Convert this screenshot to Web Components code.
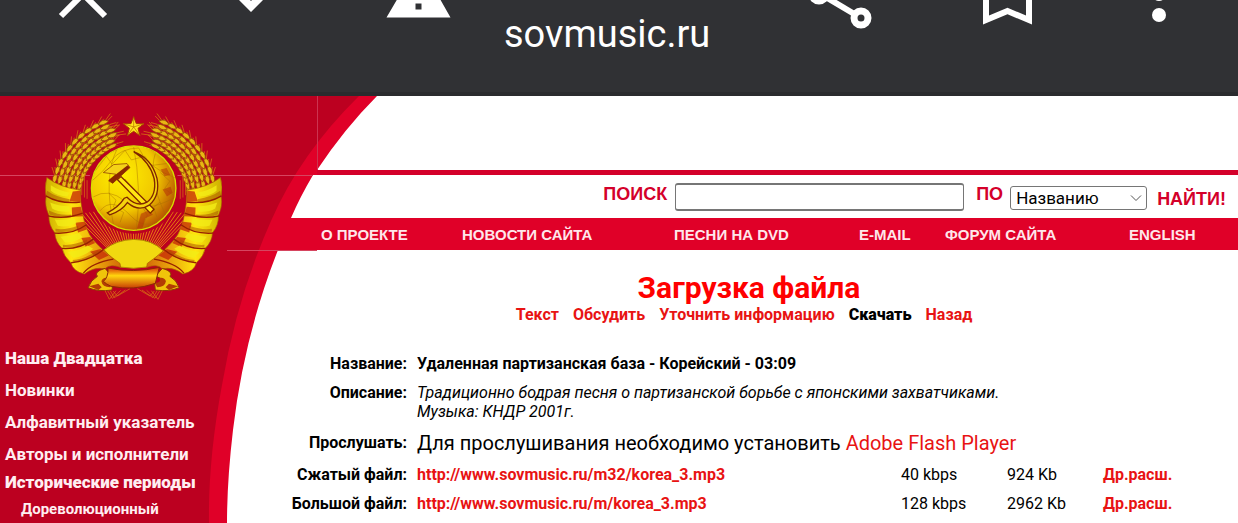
<!DOCTYPE html>
<html lang="ru">
<head>
<meta charset="utf-8">
<meta name="viewport" content="width=device-width, initial-scale=1">
<title>sovmusic.ru - Загрузка файла</title>
<style>
  body { margin: 0; background: #fff; color: #000; font: 16px/19px Roboto, "Liberation Sans", sans-serif; overflow-x: hidden; }
</style>
</head>
<body>
<browser-bar>sovmusic.ru</browser-bar>
<site-frame>
  <side-menu slot="side"></side-menu>
  <site-header slot="header"></site-header>
  <file-page slot="main">Загрузка файла</file-page>
</site-frame>

<script>
// --- Browser toolbar ---

class BrowserBar extends HTMLElement {
  constructor() {
    super();
    this.attachShadow({ mode: 'open' }).innerHTML = `
      <style>
        :host { display: flex; align-items: flex-start; height: 92px; overflow: hidden; background: #303134; border-bottom: 4px solid #2a2b2e; color: #fff; padding-right: 12px; }
        button { flex: none; width: 168px; height: 40px; padding: 0; border: 0; background: none; }
        button:last-child { width: 134px; }
        svg { display: block; width: 100%; height: 40px; fill: #fff; }
        .line { fill: none; stroke: #fff; stroke-width: 6; }
        .host { flex: 1; padding-top: 12px; font-size: 38px; line-height: 44px; }
      </style>
      <button aria-label="Закрыть"><svg viewBox="0 0 168 40"><path class="line" stroke-width="7" d="M61 16 83-6 105 16"/></svg></button>
      <button aria-label="Развернуть"><svg viewBox="0 0 168 40"><path d="M71 0 83 12 95 0H84L83 1 82 0Z"/></svg></button>
      <button aria-label="Не защищено"><svg viewBox="0 0 168 40"><path fill-rule="evenodd" d="M83-38 114.500 17.500H50.500ZM79.500 3.500v6h6v-6Z"/></svg></button>
      <div class="host"><slot></slot></div>
      <button aria-label="Поделиться"><svg viewBox="0 0 168 40"><path class="line" d="M63-7 105 18"/><circle cx="63" cy="-6" r="10.500"/><circle class="line" style="fill:#303134;stroke-width:7" cx="105" cy="18" r="7"/></svg></button>
      <button aria-label="Закладка"><svg viewBox="0 0 168 40"><path class="line" d="M62-20V20L83.500 11 105 20V-20"/></svg></button>
      <button aria-label="Меню"><svg viewBox="0 0 134 40"><circle cx="67" cy="15" r="7"/><circle cx="67" cy="-6" r="7"/></svg></button>
    `;
  }
}
customElements.define('browser-bar', BrowserBar);

// --- State emblem ---

class StateEmblem extends HTMLElement {
  constructor() {
    super();
    this.attachShadow({ mode: 'open' });
  }

  // one ear of wheat that follows an arc around the globe
  ear(radius, from, to) {
    let out = '';
    for (let a = from; a <= to; a += 6) {
      const rad = a * Math.PI / 180;
      const x = Math.round(311 + radius * Math.cos(rad));
      const y = Math.round(292 + radius * Math.sin(rad));
      out += `<g transform="translate(${x} ${y}) rotate(${a + 90})">
        <path class="awn" d="M0 0 36-15M0 3 40 8M0-3 34-24M4 9 44 18"/>
        <path class="grain" d="M-13-7Q5-23 20-5 1 3-13-7ZM-13 7Q5 23 20 5 1-3-13 7Z"/>
      </g>`;
    }
    return out;
  }

  rays() {
    let out = '';
    for (let x = 130; x <= 492; x += 12) {
      out += `<path d="M${Math.round(311 + (x - 311) * 0.350)} 460 ${x} ${320 + Math.round(Math.abs(x - 311) / 8)}"/>`;
    }
    return out;
  }

  connectedCallback() {
    const side = `
      ${this.ear(174, 186, 246)}${this.ear(205, 190, 252)}${this.ear(236, 193, 250)}
      <path class="awn" d="M155 220V285M163 222V292M171 240V296"/>
      <path fill="url(#coil)" stroke="#a85a00" stroke-width="2" d="M50 232Q90 262 151 270 150 300 157 335 165 390 190 420 220 455 270 490L272 502Q240 490 225 506 190 500 163 522 130 515 122 488 100 468 96 445 75 425 74 398 55 375 56 345 42 315 48 290 42 260 50 232Z"/>
      <path fill="#c42508" opacity=".75" d="M128 274 150 272 151 305 118 304ZM125 322 152 320 159 348 126 350ZM136 368 163 365 170 388 144 397ZM154 414 180 411 195 429 167 441ZM180 455 211 447 236 466 207 480Z"/>
      <path fill="#a84a00" opacity=".5" d="M51 272Q75 290 119 297L117 306Q76 306 48 286ZM56 331Q87 347 124 343L121 352Q83 354 58 343ZM76 386Q105 391 144 377L145 388Q105 399 76 394ZM98 434Q131 437 170 419L174 428Q135 445 99 442ZM127 480Q160 479 203 451L211 457Q170 485 131 486Z"/>
      <path fill="#f2ec16" opacity=".8" d="M62 255Q87 272 119 277L112 289Q80 288 62 272ZM60 307Q84 318 118 318L120 334Q87 338 66 325ZM74 358Q103 361 133 354L139 369Q112 384 83 377ZM91 410Q121 408 147 399L157 411Q134 429 105 427ZM113 456Q146 451 173 436L189 446Q164 469 130 474Z"/>
      <path class="cut" d="M47 287Q90 313 151 306M53 347Q105 359 158 339M73 399Q129 403 169 374M95 445Q148 449 190 417M123 488Q180 482 220 448M160 519Q185 488 250 477"/>
      <path fill="#f0c40a" stroke="#8c3903" stroke-width="3" d="M225 505Q190 515 202 529 182 540 174 563 204 576 246 570L248 550Q216 557 218 541L245 528Z"/>
      <path fill="#b33d04" d="M214 544Q218 531 234 534 225 548 248 549L240 562Q217 562 214 544ZM177 559 205 551 215 562 205 570Z"/>
      <path class="awn" d="M225 572 238 598 258 572M233 573 247 595 272 571M241 573 253 593 286 570M249 573 262 588 300 566"/>
    `;
    this.shadowRoot.innerHTML = `
      <style>
        :host { display: block; }
        svg { display: block; width: 178px; height: 187px; }
        .grain { fill: #e9b714; stroke: #8f4304; stroke-width: 2; }
        .awn { fill: none; stroke: #d97a10; stroke-width: 2; }
        .cut { fill: none; stroke: #972000; stroke-width: 4; }
        .rays { fill: none; stroke: #e77911; stroke-width: 3; }
        .map { fill: none; stroke: #a66e00; stroke-width: 2; opacity: .65; }
      </style>
      <svg viewBox="42 38 534 562" role="img" aria-label="Герб СССР">
        <defs>
          <radialGradient id="globe" cx=".35" cy=".35" r=".7">
            <stop offset="0" stop-color="#fff000"/><stop offset=".6" stop-color="#f1c800"/><stop offset="1" stop-color="#b85500"/>
          </radialGradient>
          <linearGradient id="coil" x2="1" y2="0">
            <stop offset="0" stop-color="#ccae00"/><stop offset=".35" stop-color="#ffe60e"/><stop offset="1" stop-color="#d56909"/>
          </linearGradient>
          <linearGradient id="bow" x2="0" y2="1">
            <stop offset="0" stop-color="#d83208"/><stop offset=".4" stop-color="#ffd60e"/><stop offset="1" stop-color="#c83d05"/>
          </linearGradient>
        </defs>
        <g class="rays">${this.rays()}</g>
        <path fill="#f1d910" stroke="#b58e00" stroke-width="3" d="M222 449Q260 419 311 418 365 418 400 452L350 501Q311 508 270 501Z"/>
        <g>${side}</g>
        <g transform="translate(622 0) scale(-1 1)">${side}</g>
        <path fill="url(#bow)" stroke="#8c2c02" stroke-width="3" d="M234 504Q311 520 388 502L376 550Q311 573 243 559Q228 552 220 544 235 533 234 504Z"/>
        <circle cx="311" cy="264" r="137" fill="#bc0020"/>
        <circle cx="311" cy="264" r="127" fill="url(#globe)" stroke="#d6e000" stroke-width="4"/>
        <path class="map" d="M188 240Q220 215 245 180T326 143M190 290Q235 262 285 303T431 294M210 332Q246 287 301 346T413 334M326 143Q350 200 435 233M376 160Q353 230 407 345M260 149Q220 230 250 371M311 140Q335 260 319 390M197 210 229 168 246 192 285 150 304 179 345 168 361 196 410 190M236 279 258 300 250 320 281 337 270 367M391 217 420 243 404 265 429 284M340 325 352 345 338 379M390 306 371 322 381 351"/>
        <path fill="#b42f08" opacity=".55" d="M333 341 357 330 369 344 346 354 338 382 321 385ZM392 208 410 203 421 224 404 228ZM398 268 422 260 428 278 411 289Z"/>
        <path fill="#c06d00" d="M273 245 285 236 374 331 361 341Z"/>
        <path fill="#ffe712" stroke="#7f2600" stroke-width="4" d="M262 238 273 229 372 327 361 339Z"/>
        <path fill="#f4d317" stroke="#7f2600" stroke-width="2" d="M220 217 251 193 291 190 300 202 248 249 236 242 257 222Z"/>
        <path fill="#8c2800" d="M235 240 293 195 300 202 248 250Z"/>
        <path fill="#f5d30e" stroke="#7f2600" stroke-width="4" d="M311 154Q360 184 373 236 380 285 351 306 321 322 291 291L283 294Q265 322 232 338L239 344Q275 332 292 307 326 337 359 314 391 286 381 234 365 174 311 154Z"/>
        <path fill="#ffe31b" stroke="#a83b00" stroke-width="3" d="M311 49 319 70 342 70 324 84 330 106 311 93 292 106 298 84 280 70 303 70Z"/>
        <path fill="none" stroke="#b36600" stroke-width="2" d="M311 49V80L342 70M311 80 330 106M311 80 292 106M311 80 280 70"/>
      </svg>
    `;
  }
}
customElements.define('state-emblem', StateEmblem);

// --- Page frame with the red arc behind everything ---

class SiteFrame extends HTMLElement {
  constructor() {
    super();
    this.attachShadow({ mode: 'open' }).innerHTML = `
      <style>
        :host { display: grid; grid-template-columns: 260px 57px 1fr; grid-template-rows: auto 1fr; }
        svg { grid-area: 1 / 1 / 3 / 4; width: 378px; height: 427px; }
        aside { grid-area: 1 / 1 / 3 / 2; z-index: 1; }
        header { grid-area: 1 / 3; }
        main { grid-area: 2 / 1 / 3 / 4; padding-left: 260px; }
      </style>
      <svg viewBox="0 0 378 427" aria-hidden="true">
        <path fill="#e00028" d="M0 0H377Q345 32 317 74V79H313Q300 101 291 122H318V154H278Q244 240 233 334 227 385 227 427H0Z"/>
        <path fill="#bc0020" d="M0 0H359Q300 58 271 125 237 201 222 289 208 364 209 427H0Z"/>
        <path fill="none" stroke="#d64560" d="M0 79.500H313M227 154.500H317"/>
        <path fill="none" stroke="#cc3350" d="M317.500 0V74"/>
      </svg>
      <aside><slot name="side"></slot></aside>
      <header><slot name="header"></slot></header>
      <main><slot name="main"></slot></main>
    `;
  }
}
customElements.define('site-frame', SiteFrame);

// --- Left menu ---

class SideMenu extends HTMLElement {
  constructor() {
    super();
    this.attachShadow({ mode: 'open' }).innerHTML = `
      <style>
        :host { display: block; padding-top: 17px; }
        state-emblem { padding-left: 44px; padding-bottom: 42px; }
        nav { display: flex; flex-direction: column; padding-left: 5px; font-size: 17px; font-weight: 700; line-height: 32px; white-space: nowrap; }
        a { color: #ffeef1; text-decoration: none; }
        .strong { font-weight: 900; }
        .group { line-height: 24px; }
        .sub { padding-left: 16px; font-size: 15px; line-height: 30px; }
      </style>
      <state-emblem></state-emblem>
      <nav>
        <a class="strong" href="#top50">Наша Двадцатка</a>
        <a href="#new">Новинки</a>
        <a href="#alphabet">Алфавитный указатель</a>
        <a href="#authors">Авторы и исполнители</a>
        <a class="strong group" href="#periods">Исторические периоды</a>
        <a class="sub" href="#before">Дореволюционный</a>
      </nav>
    `;
  }
}
customElements.define('side-menu', SideMenu);

// --- Search row and top navigation ---

class SiteHeader extends HTMLElement {
  constructor() {
    super();
    this.attachShadow({ mode: 'open' }).innerHTML = `
      <style>
        :host { display: block; padding-top: 74px; font-family: "Liberation Sans", Arial, sans-serif; font-weight: 700; white-space: nowrap; }
        form { display: flex; justify-content: flex-end; align-items: center; height: 43px; padding-right: 12px; border-top: 5px solid #d4002a; color: #d4002a; font-size: 18px; line-height: 20px; }
        label { padding-bottom: 6px; }
        input { box-sizing: border-box; flex: 0 1 289px; min-width: 80px; height: 28px; margin: 0 12px 0 8px; padding: 2px 6px; border: 1px solid #767676; border-width: 2px 1px; border-radius: 3px; background: #fff; font: 16px Roboto, sans-serif; }
        .pick { display: grid; align-items: center; width: 137px; margin: 2px 10px 0 7px; }
        select { grid-area: 1 / 1; box-sizing: border-box; width: 137px; height: 24px; padding: 0 5px; appearance: none; border: 1px solid #767676; border-radius: 3px; background: #fff; color: #000; font: 17px/20px Roboto, sans-serif; }
        .pick svg { grid-area: 1 / 1; justify-self: end; width: 12px; height: 8px; margin-right: 5px; fill: none; stroke: #555; pointer-events: none; }
        button { padding: 4px 0 0; border: 0; background: none; color: inherit; font: inherit; }
        nav { display: grid; grid-template-columns: 141fr 212fr 185fr 86fr 184fr 109fr; height: 32px; padding-left: 4px; background: #e00028; font-size: 15px; line-height: 34px; }
        a { color: #ffe6ea; text-decoration: none; }
      </style>
      <form>
        <label for="query">ПОИСК</label>
        <input id="query" type="text">
        <label for="field">ПО</label>
        <span class="pick">
          <select id="field"><option>Названию</option></select>
          <svg viewBox="0 0 12 8"><path d="M1 1.500 6 6.500 11 1.500"/></svg>
        </span>
        <button type="button">НАЙТИ!</button>
      </form>
      <nav>
        <a href="#about">О ПРОЕКТЕ</a>
        <a href="#news">НОВОСТИ САЙТА</a>
        <a href="#dvd">ПЕСНИ НА DVD</a>
        <a href="#mail">E-MAIL</a>
        <a href="#forum">ФОРУМ САЙТА</a>
        <a href="#english">ENGLISH</a>
      </nav>
    `;
  }
}
customElements.define('site-header', SiteHeader);

// --- Download page ---

const files = [
  { label: 'Сжатый файл:', url: 'http://www.sovmusic.ru/m32/korea_3.mp3', rate: '40 kbps', size: '924 Kb' },
  { label: 'Большой файл:', url: 'http://www.sovmusic.ru/m/korea_3.mp3', rate: '128 kbps', size: '2962 Kb' }
];

class FilePage extends HTMLElement {
  constructor() {
    super();
    this.attachShadow({ mode: 'open' }).innerHTML = `
      <style>
        :host { display: block; padding-top: 20px; }
        h1 { margin: 0; color: #f00; font-size: 30px; line-height: 35px; text-align: center; }
        nav { display: flex; justify-content: center; gap: 14px; margin-bottom: 25px; padding-right: 10px; font-weight: 700; }
        a { color: #e81313; text-decoration: none; }
        table { width: 100%; table-layout: fixed; border-collapse: collapse; }
        .label { width: 157px; }
        .rate { width: 106px; }
        .size { width: 96px; }
        .ext { width: 135px; }
        th, td { padding: 5px 0; text-align: left; vertical-align: top; }
        th { padding-right: 10px; text-align: right; }
        .listen td { font-size: 20px; line-height: 24px; }
        .listen th { line-height: 24px; }
        td a { font-weight: 700; }
        .listen a { font-weight: 400; }
      </style>
      <h1><slot></slot></h1>
      <nav><a href="#text">Текст</a><a href="#discuss">Обсудить</a><a href="#info">Уточнить информацию</a><b>Скачать</b><a href="#back">Назад</a></nav>
      <table>
        <colgroup><col class="label"><col><col class="rate"><col class="size"><col class="ext"></colgroup>
        <tr><th>Название:</th><td colspan="4"><b>Удаленная партизанская база - Корейский - 03:09</b></td></tr>
        <tr><th>Описание:</th><td colspan="4"><i>Традиционно бодрая песня о партизанской борьбе с японскими захватчиками.<br>Музыка: КНДР 2001г.</i></td></tr>
        <tr class="listen"><th>Прослушать:</th><td colspan="4">Для прослушивания необходимо установить <a href="#flash">Adobe Flash Player</a></td></tr>
        ${files.map(f => `
          <tr><th>${f.label}</th><td><a href="${f.url}">${f.url}</a></td><td>${f.rate}</td><td>${f.size}</td><td><a href="#ext">Др.расш.</a></td></tr>
        `).join('')}
      </table>
    `;
  }
}
customElements.define('file-page', FilePage);
</script>
</body>
</html>
